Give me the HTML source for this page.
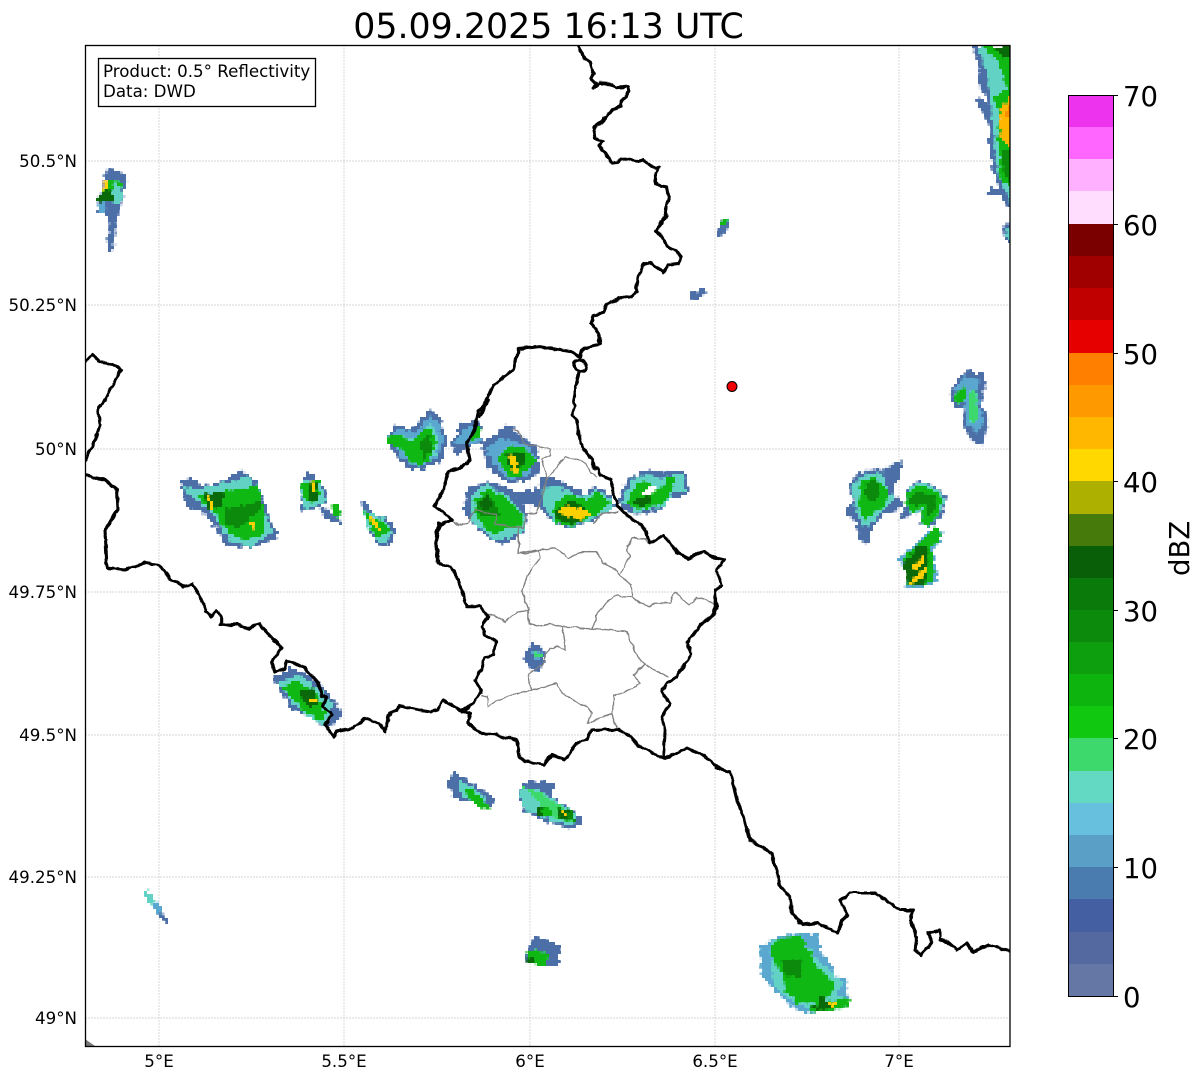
<!DOCTYPE html>
<html><head><meta charset="utf-8"><style>
html,body{margin:0;padding:0;background:#fff;width:1202px;height:1081px;overflow:hidden}
svg{display:block}
text{font-family:"DejaVu Sans","Liberation Sans",sans-serif;fill:#000}
.b{fill:#4c6fa8}.l{fill:#5aa8cf}.c{fill:#62d2c4}.m{fill:#3ed96c}.g{fill:#10b814}.d{fill:#0b8a0b}.k{fill:#0a6a0a}.y{fill:#ffd000}.o{fill:#ffb700}.r{fill:#ff8c00}.w{fill:#fff}
.n{fill:none;stroke:#000;stroke-width:3.1;stroke-linejoin:round;stroke-linecap:round;vector-effect:non-scaling-stroke}
.t{fill:none;stroke:#808080;stroke-width:1.3;stroke-linejoin:round;vector-effect:non-scaling-stroke}
.lat{font-size:16.67px;text-anchor:end}.lon{font-size:16.67px;text-anchor:middle}.cb{font-size:27.5px}
</style></head><body>
<svg xmlns="http://www.w3.org/2000/svg" width="1202" height="1081" viewBox="0 0 1202 1081">
<defs>
<clipPath id="p"><rect x="85" y="45" width="925" height="1001"/></clipPath>
<filter id="j" filterUnits="userSpaceOnUse" x="0" y="0" width="1202" height="1081" color-interpolation-filters="sRGB">
<feTurbulence type="fractalNoise" baseFrequency="0.2" numOctaves="2" seed="4" result="n"/>
<feDisplacementMap in="SourceGraphic" in2="n" scale="7" xChannelSelector="R" yChannelSelector="G" result="d"/>
<feFlood x="1" y="1" width="1" height="1" flood-color="#000"/>
<feComposite width="3" height="3"/>
<feTile result="a"/>
<feComposite in="d" in2="a" operator="in"/>
<feMorphology operator="dilate" radius="1"/>
</filter>
<filter id="w" filterUnits="userSpaceOnUse" x="0" y="0" width="1202" height="1081" color-interpolation-filters="sRGB">
<feTurbulence type="fractalNoise" baseFrequency="0.12" numOctaves="2" seed="9" result="n"/>
<feDisplacementMap in="SourceGraphic" in2="n" scale="4" xChannelSelector="R" yChannelSelector="G"/>
</filter>
</defs>
<rect width="1202" height="1081" fill="#fff"/>
<text x="548.500" y="38" font-size="34.8" text-anchor="middle">05.09.2025 16:13 UTC</text>

<g stroke="#c8c8c8" stroke-width="0.7" stroke-dasharray="2 1" fill="none">
<path d="M159 45V1046M344 45V1046M530 45V1046M715 45V1046M899 45V1046"/>
<path d="M85 161H1010M85 305H1010M85 449H1010M85 592H1010M85 735H1010M85 877H1010M85 1018H1010"/>
</g>

<g clip-path="url(#p)"><g filter="url(#j)">
<g transform="translate(380 400) scale(.3333)">
<polygon class="b" points="18,115 45,75 100,90 110,70 150,30 180,55 200,120 185,180 130,210 90,205 55,175"/>
<polygon class="l" points="28,115 55,85 105,100 150,45 175,65 190,125 175,170 125,195 90,190 60,165"/>
<polygon class="c" points="60,110 105,115 150,70 170,100 172,160 125,190 90,180 70,150"/>
<polygon class="g" points="20,115 50,100 90,130 130,90 160,90 165,130 150,180 120,195 85,180 70,150 25,130"/>
<polygon class="d" points="120,130 150,100 155,150 130,190"/>
<polygon class="b" points="215,135 245,65 300,65 305,125 270,140 230,165"/>
<polygon class="l" points="225,130 250,85 295,80 300,125 265,130"/>
<polygon class="g" points="270,100 305,75 305,110 280,120"/>
<polygon class="b" points="305,130 355,100 380,70 420,105 470,140 480,215 430,245 385,250 325,205"/>
<polygon class="l" points="320,150 360,115 440,130 470,180 440,225 390,240 345,200"/>
<polygon class="g" points="355,170 385,140 440,145 470,185 425,225 395,235 365,200"/>
<polygon class="k" points="375,165 410,155 440,165 430,195 410,225 385,200"/>
<polygon class="y" points="385,155 405,170 415,220 400,225 393,190"/>
<polygon class="b" points="250,330 265,265 325,245 395,265 440,330 440,390 385,430 350,430 285,380"/>
<polygon class="c" points="270,285 320,255 380,285 430,340 435,385 385,415 345,420 280,370"/>
<polygon class="g" points="280,300 325,265 380,295 430,345 430,380 380,385 345,405 290,360"/>
<polygon class="d" points="285,310 320,280 345,300 360,345 325,350 295,345"/>
<polygon class="k" points="295,305 325,285 340,320 310,335"/>
<polygon class="b" points="410,280 470,265 490,230 540,240 620,285 640,255 690,285 705,320 640,360 570,385 515,360 480,320 420,310"/>
<polygon class="c" points="490,260 540,260 610,295 650,270 695,295 695,330 640,355 570,380 520,360 490,310"/>
<polygon class="g" points="510,330 560,280 620,300 650,275 695,310 640,350 575,378 530,365"/>
<polygon class="k" points="520,340 575,300 625,330 630,350 580,375 540,365"/>
<polygon class="y" points="530,335 575,315 600,325 635,345 600,360 575,355 545,345"/>
<polygon class="b" points="715,300 745,235 800,210 870,215 915,210 925,270 905,290 860,300 840,330 770,345 725,325"/>
<polygon class="c" points="725,305 755,240 800,225 850,240 875,225 910,225 915,275 875,280 855,320 770,335"/>
<polygon class="g" points="740,305 770,250 800,240 820,255 800,280 850,260 865,225 885,235 870,280 845,315 770,330"/>
<polygon class="w" points="780,275 825,262 830,280 790,285"/>
<polygon class="k" points="755,305 800,285 815,300 785,325"/>
</g>
<g transform="translate(170 460) scale(.3333)">
<polygon class="b" points="30,65 65,55 95,80 160,65 220,30 265,75 290,150 325,235 235,265 170,255 125,185 95,155 50,140"/>
<polygon class="c" points="40,85 80,90 160,70 240,50 280,160 310,210 240,260 175,240 130,165"/>
<polygon class="g" points="85,110 155,95 265,75 285,160 280,225 225,240 170,215 130,155 100,130"/>
<polygon class="k" points="100,100 160,95 160,140 115,150"/>
<polygon class="d" points="165,145 270,125 275,145 205,205 170,200 160,175"/>
<polygon class="y" points="110,105 117,105 132,150 124,150"/><polygon class="y" points="238,185 246,185 254,205 246,205"/>
<polygon class="b" points="390,95 410,40 430,40 460,80 475,125 445,140 400,155"/>
<polygon class="c" points="390,100 400,60 450,70 470,125 405,150"/>
<polygon class="g" points="395,70 445,60 450,110 420,130 400,115"/>
<polygon class="k" points="410,75 440,65 445,115 415,125"/>
<polygon class="y" points="422,62 430,62 438,100 430,100"/>
<polygon class="b" points="450,150 465,140 510,180 520,190 505,192 470,180"/>
<polygon class="g" points="485,135 505,130 515,175 495,170"/>
<polygon class="b" points="575,125 590,135 610,165 645,170 680,210 660,255 630,255 600,220"/>
<polygon class="c" points="580,150 640,175 665,215 650,245 630,245 595,205"/>
<polygon class="g" points="580,150 600,170 640,185 660,210 630,235 605,215"/>
<polygon class="y" points="595,170 607,170 634,212 622,215"/>
<polygon class="b" points="310,655 360,625 410,640 470,690 520,770 490,795 460,800 415,770 365,745"/>
<polygon class="c" points="320,670 385,645 440,680 490,740 470,790 440,790 380,740"/>
<polygon class="g" points="330,680 380,660 440,700 470,760 445,785 395,745"/>
<polygon class="k" points="385,695 430,680 450,730 415,745"/>
<polygon class="y" points="420,715 440,725 435,735 422,728"/>
</g>
<g transform="translate(840 360) scale(.3333)">
<polygon class="b" points="330,105 350,60 380,35 430,40 435,80 420,130 445,170 445,190 425,255 390,235 370,190 375,140 345,140"/>
<polygon class="l" points="345,85 375,50 420,60 410,90 420,150 435,180 415,215 385,200 375,135"/>
<polygon class="g" points="340,110 375,75 380,120 350,130"/>
<polygon class="m" points="385,100 410,90 415,180 390,190"/>
<polygon class="b" points="17,460 40,420 25,375 60,335 130,325 190,300 180,345 160,380 165,410 190,425 170,450 130,460 100,500 85,550 60,540 50,490"/>
<polygon class="c" points="45,440 35,375 75,345 130,340 140,395 165,415 130,450 90,495 70,500"/>
<polygon class="g" points="55,440 60,365 110,350 145,400 135,440 70,480"/>
<polygon class="d" points="75,370 110,355 125,400 100,430 75,410"/>
<polygon class="b" points="175,480 195,450 200,385 235,360 285,380 320,410 310,460 270,505 240,490 250,450 215,465"/>
<polygon class="c" points="200,450 205,385 240,365 295,390 315,415 300,460 260,500 245,490 250,450 210,465"/>
<polygon class="g" points="195,430 205,395 235,375 295,395 310,420 290,470 260,505 245,485 248,440 215,465"/>
<polygon class="d" points="205,420 225,395 260,400 285,410 285,450 260,480 255,430 225,440"/>
<polygon class="l" points="175,595 210,570 270,510 315,515 280,570 285,610 295,660 250,685 195,685 205,640"/>
<polygon class="g" points="185,600 215,570 285,500 310,520 275,565 280,620 280,665 200,680 210,630"/>
<polygon class="k" points="190,605 230,560 265,555 265,640 250,680 205,670"/>
<polygon class="y" points="215,620 250,590 252,607 225,627"/><polygon class="y" points="205,670 255,625 262,637 215,672"/>
</g>
<g transform="translate(740 900) scale(.3333)">
<polygon class="l" points="62,140 90,120 150,103 235,100 240,160 270,185 280,225 318,230 322,270 330,320 200,340 170,330 135,300 100,265 65,230"/>
<polygon class="c" points="90,125 180,110 210,150 245,190 280,225 310,250 290,280 330,320 240,335 170,310 135,285 100,260"/>
<polygon class="g" points="92,140 120,115 180,105 210,155 225,190 255,220 290,265 270,285 250,310 170,310 135,270 125,215 95,180"/>
<polygon class="d" points="125,180 185,175 190,235 135,225"/>
<polygon class="k" points="235,285 255,290 265,310 240,310"/>
<polygon class="g" points="200,320 280,300 330,295 330,320 240,335 205,335"/>
<polygon class="k" points="205,320 265,305 298,318 240,332"/>
<polygon class="y" points="265,310 295,305 290,315 270,318"/>
</g>
<g transform="translate(430 760) scale(.3333)">
<polygon class="b" points="50,70 75,35 120,65 195,120 180,140 115,120 70,115 65,90"/>
<polygon class="c" points="85,60 125,80 175,120 125,125 85,90"/>
<polygon class="g" points="100,85 130,90 170,130 183,148 145,140 115,115"/>
<polygon class="b" points="265,100 280,70 340,60 375,75 365,110 440,160 460,185 425,210 340,180 280,150"/>
<polygon class="c" points="270,90 320,85 380,125 440,165 425,195 340,175 280,140"/>
<polygon class="m" points="275,75 320,95 380,130 435,165 430,190 355,170 320,150 340,140"/>
<polygon class="g" points="320,145 365,145 370,170 320,165"/>
<polygon class="d" points="380,145 425,150 435,185 390,178"/>
<polygon class="k" points="320,145 340,145 340,165 320,165"/>
<polygon class="k" points="385,150 420,150 415,180 390,175"/>
<polygon class="y" points="395,155 415,165 410,170 398,165"/>
<polygon class="b" points="310,530 398,555 385,575 385,615 350,620 285,600 300,560"/>
<polygon class="g" points="295,570 355,575 355,600 345,625 290,605"/>
<polygon class="k" points="285,592 318,600 315,612 290,605"/>
</g>
<g transform="translate(430 520) scale(.3333)">
<polygon class="b" points="280,415 305,370 335,380 345,405 330,455 300,445"/>
<polygon class="l" points="300,395 335,395 325,430"/>
<polygon class="m" points="310,395 335,405 325,415"/>
</g>
<g transform="translate(85 40) scale(.3333)">
<polygon class="b" points="35,515 45,460 65,385 125,405 110,495 95,525 85,630 65,630 75,540 65,525"/>
<polygon class="g" points="38,480 50,455 70,420 115,430 100,480"/>
<polygon class="k" points="38,480 50,455 85,450 85,485 50,490"/>
<polygon class="y" points="52,450 60,418 72,420 65,450"/>
<polygon class="c" points="85,430 110,440 110,490 85,490"/>
<polygon class="l" points="38,490 65,490 60,520 38,518"/>
</g>
<g transform="translate(560 40) scale(.3333)">
<polygon class="b" points="468,585 480,550 490,535 515,533 505,560 485,590"/>
<polygon class="g" points="480,540 505,535 500,555 485,555"/>
<polygon class="b" points="390,775 400,755 435,745 440,755 410,780"/>
</g>
<polygon class="c" points="143,892 148,889 155,900 150,904"/>
<polygon class="l" points="151,904 158,901 164,913 158,914"/>
<polygon class="b" points="160,912 169,921 167,923 158,914"/>
<g transform="translate(950 40) scale(.3333)">
<polygon class="b" points="65,18 190,18 190,520 150,470 105,460 125,445 150,450 125,385 130,370 110,290 130,280 75,180 90,170 115,190 80,110 90,95 75,40"/>
<polygon class="c" points="85,18 190,18 190,500 160,440 140,390 135,330 130,260 120,170 110,100"/>
<polygon class="g" points="100,18 190,18 190,450 155,420 145,385 150,360 140,280 150,230 125,170 170,150 150,80"/>
<polygon class="k" points="120,18 190,18 190,50 165,55"/>
<polygon class="d" points="190,330 190,440 160,400 155,330"/>
<polygon class="o" points="190,155 155,200 150,240 150,280 170,320 190,320"/>
<polygon class="r" points="190,190 165,215 175,235 190,225"/>
<polygon class="b" points="155,555 175,550 190,560 190,620 165,595"/>
<polygon class="c" points="170,565 190,565 190,610 175,595"/>
</g>
</g></g>

<polygon points="85,1039 85,1046 95,1046" fill="#777"/>

<g clip-path="url(#p)"><g filter="url(#w)">
<g transform="translate(430 520) scale(.3333)">
<polyline class="t" points="265,40 265,100 290,100 325,90 375,85 395,95 415,115 445,95 500,95 520,130 560,150 570,165 600,110 590,90 605,55 645,55 655,70"/>
<polyline class="t" points="570,165 605,195 605,230 560,225 530,245 500,285 500,300 485,325 395,320 360,310 340,320 295,310 295,270 275,215 295,160 330,115 325,90"/>
<polyline class="t" points="605,230 655,262 675,250 720,248 735,218 775,255 800,232 855,250"/>
<polyline class="t" points="295,270 260,275 225,305 195,285 175,285"/>
<polyline class="t" points="395,320 405,375 405,392 380,378 360,385 335,435 295,460 305,510 380,490 405,525 420,535 470,560 485,580 475,610 548,580 560,625"/>
<polyline class="t" points="485,325 590,335 620,410 645,432 680,455 715,470"/>
<polyline class="t" points="645,432 610,465 630,490 600,510 550,530 548,580"/>
<polyline class="t" points="305,510 260,520 185,550 175,560 172,530 155,525"/>
</g>
<g transform="translate(380 400) scale(.3333)">
<polyline class="t" points="395,85 415,95 430,130 510,145 512,165 485,178 490,200 500,230 490,280 470,340 440,340 430,385 390,380 340,370 350,345 285,330 265,370 235,375 215,360"/>
<polyline class="t" points="500,240 555,170 620,190 630,215 650,230"/>
<polyline class="t" points="415,385 415,460 470,450"/>
<polyline class="t" points="640,370 665,340 715,335"/>
<polyline class="t" points="740,440 755,415 800,415"/>
</g>
<polyline class="n" points="85,362 92,354 100,362 115,365 121,370 110,390 105,400 98,408 100,425 93,445 85,460"/>
<polyline class="n" points="85,475 105,480 117,490 118,510 105,530 107,568 125,570 145,563 160,565 170,578"/>
<g transform="translate(170 460) scale(.3333)">
<polyline class="n" points="0,355 40,378 68,373 105,440 105,455 125,468 140,452 152,470 152,495 200,493 240,507 265,490 335,565 305,605 315,635 345,625 352,602 405,625 445,670 455,710 470,712 458,740 485,765 465,795 490,830 500,815 550,805 585,775 630,790 645,815 655,770 690,738 720,745 780,756"/>
</g>
<g transform="translate(560 40) scale(.3333)">
<polyline class="n" points="55,18 70,50 90,70 100,100 92,115 108,130 102,145 120,130 150,132 170,143 205,140 208,155 185,185 185,200 158,208 130,240 100,265 105,295 128,305 115,320 135,335 155,372 185,358 205,357 225,365 250,360 280,383 298,383 285,400 285,430 320,440 326,480 315,510 318,530 288,572 312,600 320,618 345,630 362,652 355,670 325,675 310,700 300,690 270,668 248,675 235,710 228,745 232,755 215,772 190,770 140,795 130,820 100,825 92,848 115,880 120,915 90,920 70,925 62,950 35,935 0,930 -60,920 -125,927 -140,990 -200,1035 -240,1130"/>
<path class="n" d="M62 958 C40 960 35 990 60 995 C85 995 85 965 62 958 M58 995 L50 1030 L40 1080"/>
</g>
<g transform="translate(380 400) scale(.3333)">
<polyline class="n" points="325,0 320,12 295,35 290,60 280,100 258,130 270,180 240,205 205,215 190,270 162,318 200,345 215,360 180,375 170,400 168,425 175,470"/>
<polyline class="n" points="580,0 585,20 575,45 590,60 595,100 600,125 612,150 635,175 640,205 655,205 660,225 695,240 695,270 705,290 715,320 745,350 785,375 800,400"/>
</g>
<g transform="translate(430 520) scale(.3333)">
<polyline class="n" points="30,10 18,60 25,130 60,140 85,180 110,260 150,260 175,290 155,320 165,345 200,365 190,405 165,410 155,450 135,480 155,510 130,550 95,575"/>
<polyline class="n" points="0,575 20,570 40,540 90,570 120,580 115,610 155,640 200,645 260,660 270,710 285,725 330,730 345,733 365,705 405,720 440,670 470,655 485,630 565,628 600,650 625,675 700,715 705,640 695,590 720,550 695,515 710,490 740,470 785,400 770,370 810,315 855,280 858,262 855,210 875,195 860,150 885,120 860,115 820,95 775,115 745,100 700,45 660,70 650,40"/>
<polyline class="n" points="705,715 770,685 810,700 870,745"/>
</g>
<polyline class="n" points="716,768 730,772 737,800 745,820 750,840 772,853 780,885 790,897 792,913 802,925 818,923 838,933 842,920 848,915 840,900 850,893 875,893 900,910 913,910 910,920 917,937 915,950 920,955 932,943 928,933 940,930 940,940 948,942 957,950 967,943 973,952 988,945 1007,950 1012,952"/>
</g></g>

<circle cx="732" cy="386.5" r="5" fill="#f00000" stroke="#000" stroke-width="1"/>

<rect x="98.5" y="58.5" width="217" height="48" fill="#fff" stroke="#000" stroke-width="1.3"/>
<text x="103" y="77" font-size="16.67">Product: 0.5° Reflectivity</text>
<text x="103" y="97" font-size="16.67">Data: DWD</text>

<rect x="85.5" y="45.5" width="924.5" height="1001" fill="none" stroke="#000" stroke-width="1.3"/>

<text class="lat" x="77" y="167">50.5°N</text>
<text class="lat" x="77" y="311">50.25°N</text>
<text class="lat" x="77" y="455">50°N</text>
<text class="lat" x="77" y="598">49.75°N</text>
<text class="lat" x="77" y="741">49.5°N</text>
<text class="lat" x="77" y="883">49.25°N</text>
<text class="lat" x="77" y="1024">49°N</text>
<text class="lon" x="159" y="1067">5°E</text>
<text class="lon" x="344" y="1067">5.5°E</text>
<text class="lon" x="530" y="1067">6°E</text>
<text class="lon" x="715" y="1067">6.5°E</text>
<text class="lon" x="899" y="1067">7°E</text>

<g shape-rendering="crispEdges">
<rect x="1068" y="95" width="45" height="32" fill="#ee33ee"/>
<rect x="1068" y="127" width="45" height="32" fill="#ff66ff"/>
<rect x="1068" y="159" width="45" height="32" fill="#ffb0ff"/>
<rect x="1068" y="191" width="45" height="33" fill="#ffddff"/>
<rect x="1068" y="224" width="45" height="32" fill="#7a0000"/>
<rect x="1068" y="256" width="45" height="32" fill="#a00000"/>
<rect x="1068" y="288" width="45" height="32" fill="#c00000"/>
<rect x="1068" y="320" width="45" height="33" fill="#e60000"/>
<rect x="1068" y="353" width="45" height="32" fill="#ff7f00"/>
<rect x="1068" y="385" width="45" height="32" fill="#ff9900"/>
<rect x="1068" y="417" width="45" height="32" fill="#ffb700"/>
<rect x="1068" y="449" width="45" height="32" fill="#ffd800"/>
<rect x="1068" y="481" width="45" height="33" fill="#aeb000"/>
<rect x="1068" y="514" width="45" height="32" fill="#467a0a"/>
<rect x="1068" y="546" width="45" height="32" fill="#085f08"/>
<rect x="1068" y="578" width="45" height="32" fill="#0a7a0a"/>
<rect x="1068" y="610" width="45" height="32" fill="#0b8a0b"/>
<rect x="1068" y="642" width="45" height="32" fill="#0d9f0d"/>
<rect x="1068" y="674" width="45" height="32" fill="#0eb40e"/>
<rect x="1068" y="706" width="45" height="32" fill="#10c810"/>
<rect x="1068" y="738" width="45" height="33" fill="#3ed96c"/>
<rect x="1068" y="771" width="45" height="32" fill="#63d8c2"/>
<rect x="1068" y="803" width="45" height="32" fill="#66c0de"/>
<rect x="1068" y="835" width="45" height="32" fill="#5a9fc6"/>
<rect x="1068" y="867" width="45" height="32" fill="#4b7cb0"/>
<rect x="1068" y="899" width="45" height="33" fill="#4560a2"/>
<rect x="1068" y="932" width="45" height="32" fill="#54699f"/>
<rect x="1068" y="964" width="45" height="32" fill="#6577a5"/>
</g>
<rect x="1068.500" y="95.500" width="45" height="901" fill="none" stroke="#000" stroke-width="1"/>
<path d="M1113 95.500h5M1113 224.500h5M1113 353.500h5M1113 481.500h5M1113 610.500h5M1113 738.500h5M1113 867.500h5M1113 996.500h5" stroke="#000" stroke-width="1" fill="none"/>
<text class="cb" x="1123" y="106">70</text>
<text class="cb" x="1123" y="235">60</text>
<text class="cb" x="1123" y="364">50</text>
<text class="cb" x="1123" y="492">40</text>
<text class="cb" x="1123" y="621">30</text>
<text class="cb" x="1123" y="749">20</text>
<text class="cb" x="1123" y="878">10</text>
<text class="cb" x="1123" y="1007">0</text>
<text class="cb" transform="translate(1189 576) rotate(-90)">dBZ</text>
</svg>
</body></html>
